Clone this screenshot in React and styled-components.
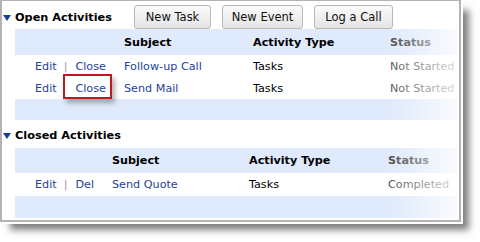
import React from 'react';
import styled, { createGlobalStyle } from 'styled-components';

const GlobalStyle = createGlobalStyle`
  html, body {
    margin: 0;
    padding: 0;
    background: #ffffff;
  }
  body {
    font-family: "DejaVu Sans", Verdana, sans-serif;
    font-size: 11.2px;
    color: #000;
  }
`;

const Page = styled.div`
  width: 480px;
  height: 242px;
  overflow: hidden;
  background: #fff;
`;

const Panel = styled.div`
  width: 455px;
  height: 219px;
  border: 2px solid #b3b3b3;
  border-top-width: 1px;
  background: #fff;
  box-shadow: 0 0 0 2px #fff, 9px 9px 7px -1px rgba(0, 0, 0, 0.5);
  display: flex;
  flex-direction: column;
  padding-right: 2px;
`;

const SectionHead = styled.div`
  display: flex;
  align-items: center;
  height: ${p => p.$h}px;
  padding: ${p => p.$pt || 0}px 0 0 1px;
  box-sizing: border-box;
`;

const Arrow = styled.span`
  width: 0;
  height: 0;
  border-left: 4.5px solid transparent;
  border-right: 4.5px solid transparent;
  border-top: 6px solid #1b3b9e;
  margin-right: 4px;
  margin-top: 1px;
`;

const Title = styled.h2`
  margin: 0;
  font-size: 11.3px;
  font-weight: bold;
  width: 119px;
  white-space: nowrap;
`;

const Buttons = styled.div`
  display: flex;
  gap: 11px;
  margin-top: -2px;
`;

const Button = styled.button`
  box-sizing: border-box;
  height: 24px;
  width: ${p => p.$w}px;
  padding: 0;
  white-space: nowrap;
  font-family: "DejaVu Sans", Verdana, sans-serif;
  font-size: 11.5px;
  color: #111;
  background: linear-gradient(#fbfbfb, #e4e4e4);
  border: 1px solid #b8b8b8;
  border-radius: 3px;
`;

const Table = styled.div`
  position: relative;
  margin-left: 13px;
  &::after {
    content: '';
    position: absolute;
    top: 0;
    bottom: 0;
    right: 0;
    width: 70px;
    background: linear-gradient(to right, rgba(255, 255, 255, 0), rgba(255, 255, 255, 0.8));
    pointer-events: none;
  }
`;

const Row = styled.div`
  display: grid;
  grid-template-columns: ${p => p.$cols};
  align-items: center;
  height: ${p => p.$h}px;
  padding-left: 20px;
  background: ${p => (p.$blue ? '#dfeafc' : '#fff')};
`;

const HeadCell = styled.div`
  font-weight: bold;
  color: ${p => (p.$muted ? '#4a4a4a' : '#000')};
  white-space: nowrap;
`;

const Cell = styled.div`
  white-space: nowrap;
  color: ${p => (p.$muted ? '#555' : '#000')};
`;

const Actions = styled.div`
  display: flex;
  align-items: center;
  white-space: nowrap;
`;

const Link = styled.a`
  color: #24449a;
  text-decoration: none;
  position: relative;
  ${p =>
    p.$marked &&
    `
    &::after {
      content: '';
      position: absolute;
      left: -12px;
      top: -8px;
      width: 45px;
      height: 21px;
      border: 2px solid #b81c22;
      box-shadow: 3px 4px 5px rgba(0, 0, 0, 0.3);
    }
  `}
`;

const Sep = styled.span`
  color: #999;
  margin: 0 8px 0 7px;
  visibility: ${p => (p.$hidden ? 'hidden' : 'visible')};
`;

const OPEN_COLS = '89px 129px 137px 1fr';
const CLOSED_COLS = '77px 137px 139px 1fr';

export default function App() {
  return (
    <Page>
      <GlobalStyle />
      <Panel>
        <SectionHead $h={28} $pt={5}>
          <Arrow />
          <Title>Open Activities</Title>
          <Buttons>
            <Button $w={77}>New Task</Button>
            <Button $w={81}>New Event</Button>
            <Button $w={79}>Log a Call</Button>
          </Buttons>
        </SectionHead>
        <Table>
          <Row $blue $h={26} $cols={OPEN_COLS}>
            <div />
            <HeadCell>Subject</HeadCell>
            <HeadCell>Activity Type</HeadCell>
            <HeadCell $muted>Status</HeadCell>
          </Row>
          <Row $h={22} $cols={OPEN_COLS}>
            <Actions>
              <Link>Edit</Link>
              <Sep>|</Sep>
              <Link>Close</Link>
            </Actions>
            <Link>Follow-up Call</Link>
            <Cell>Tasks</Cell>
            <Cell $muted>Not Started</Cell>
          </Row>
          <Row $h={22} $cols={OPEN_COLS}>
            <Actions>
              <Link>Edit</Link>
              <Sep $hidden>|</Sep>
              <Link $marked>Close</Link>
            </Actions>
            <Link>Send Mail</Link>
            <Cell>Tasks</Cell>
            <Cell $muted>Not Started</Cell>
          </Row>
          <Row $blue $h={21} $cols={OPEN_COLS} />
        </Table>
        <SectionHead $h={28} $pt={3}>
          <Arrow />
          <Title>Closed Activities</Title>
        </SectionHead>
        <Table>
          <Row $blue $h={25} $cols={CLOSED_COLS}>
            <div />
            <HeadCell>Subject</HeadCell>
            <HeadCell>Activity Type</HeadCell>
            <HeadCell $muted>Status</HeadCell>
          </Row>
          <Row $h={23} $cols={CLOSED_COLS}>
            <Actions>
              <Link>Edit</Link>
              <Sep>|</Sep>
              <Link>Del</Link>
            </Actions>
            <Link>Send Quote</Link>
            <Cell>Tasks</Cell>
            <Cell $muted>Completed</Cell>
          </Row>
          <Row $blue $h={22} $cols={CLOSED_COLS} />
        </Table>
      </Panel>
    </Page>
  );
}
